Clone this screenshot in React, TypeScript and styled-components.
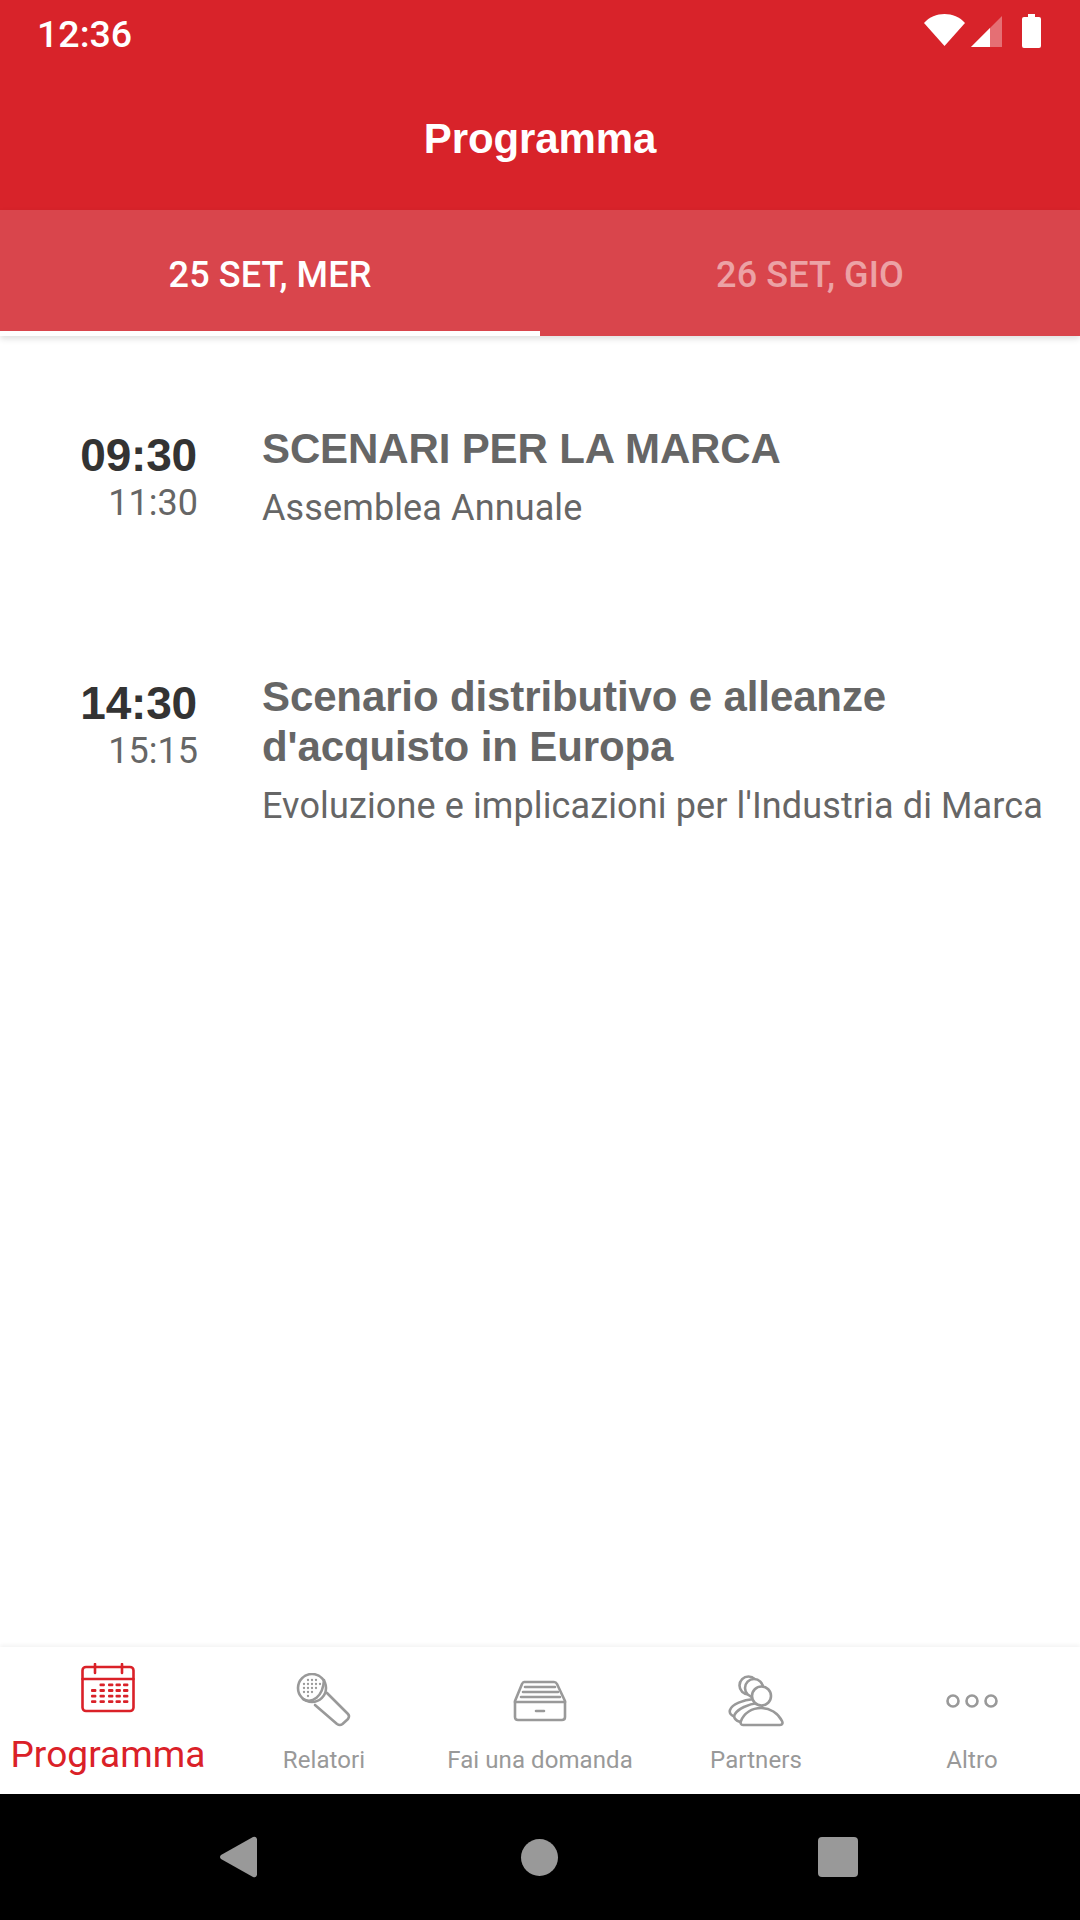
import React from "react";
import styled, { createGlobalStyle } from "styled-components";

const Global = createGlobalStyle`
  html, body { margin: 0; padding: 0; background: #fff; }
  #root { width: 1080px; height: 1920px; }
  * { box-sizing: border-box; }
`;

const Screen = styled.div`
  width: 1080px;
  height: 1920px;
  display: flex;
  flex-direction: column;
  overflow: hidden;
  background: #fff;
`;

const StatusBar = styled.div`
  height: 63px;
  background: #d8232a;
  display: flex;
  align-items: flex-start;
  justify-content: space-between;
  padding: 14px 38px 0 37px;
`;

const Clock = styled.span`
  font: 500 37.5px/40px Roboto, sans-serif;
  color: #fff;
`;

const StatusIcons = styled.svg`
  width: 118px;
  height: 36px;
  display: block;
`;

const Header = styled.header`
  height: 147px;
  background: #d8232a;
  display: flex;
  align-items: center;
  justify-content: center;
  padding-top: 4px;
`;

const HeaderTitle = styled.h1`
  margin: 0;
  font: 700 42px/48px "Liberation Sans", Arial, sans-serif;
  letter-spacing: -0.1px;
  color: #fff;
`;

const Tabs = styled.nav`
  height: 126px;
  background: #d9454c;
  display: flex;
  position: relative;
  z-index: 1;
  box-shadow: 0 3px 6px rgba(0, 0, 0, 0.12);
`;

const Tab = styled.div<{ $active?: boolean }>`
  flex: 1;
  display: flex;
  align-items: center;
  justify-content: center;
  padding-top: 3px;
  font: 500 36px/42px Roboto, sans-serif;
  letter-spacing: 0.1px;
  color: ${(p) => (p.$active ? "#fff" : "rgba(255,255,255,0.5)")};
  box-shadow: ${(p) => (p.$active ? "inset 0 -5px 0 #fff" : "none")};
`;

const Content = styled.main`
  flex: 1;
  padding-top: 88px;
`;

const Session = styled.article`
  display: flex;
  min-height: 248px;
`;

const Times = styled.div`
  width: 198px;
  flex: none;
  text-align: right;
  padding-top: 6px;
`;

const Start = styled.div`
  font: 700 46px/50px "Liberation Sans", Arial, sans-serif;
  letter-spacing: -0.2px;
  margin-right: 1px;
  color: #333;
`;

const End = styled.div`
  font: 400 36px/40px Roboto, sans-serif;
  margin-top: 3px;
  color: #666;
`;

const Body = styled.div`
  margin-left: 64px;
  flex: 1;
`;

const Title = styled.h2`
  margin: 0;
  font: 700 42px/50px "Liberation Sans", Arial, sans-serif;
  letter-spacing: -0.12px;
  color: #666;
`;

const Subtitle = styled.p`
  margin: 9px 0 0;
  font: 400 36px/50px Roboto, sans-serif;
  letter-spacing: 0.12px;
  color: #666;
  white-space: nowrap;
`;

const BottomNav = styled.nav`
  height: 147px;
  background: #fff;
  display: flex;
  position: relative;
  box-shadow: 0 -2px 4px rgba(0, 0, 0, 0.05);
`;

const NavItem = styled.div<{ $active?: boolean }>`
  width: 216px;
  display: flex;
  flex-direction: column;
  align-items: center;
  justify-content: flex-start;
  padding-top: ${(p) => (p.$active ? "16px" : "26px")};
  color: ${(p) => (p.$active ? "#da2128" : "#999")};
`;

const NavLabel = styled.span<{ $active?: boolean }>`
  font: 400 ${(p) => (p.$active ? "37px/44px" : "24px/30px")} Roboto, sans-serif;
  letter-spacing: 0.08px;
  margin-top: ${(p) => (p.$active ? "20px" : "16px")};
  white-space: nowrap;
`;

const NavIcon = styled.svg`
  display: block;
  fill: none;
  stroke: currentColor;
  stroke-width: 2.6;
  stroke-linecap: round;
  stroke-linejoin: round;
`;

const SystemBar = styled.div`
  height: 126px;
  background: #000;
  display: flex;
  align-items: center;
  padding-left: 220px;
`;

const BackKey = styled.svg`
  width: 37px;
  height: 42px;
  display: block;
`;

const HomeKey = styled.div`
  width: 37px;
  height: 37px;
  border-radius: 50%;
  background: #999;
  margin-left: 264px;
`;

const RecentKey = styled.div`
  width: 40px;
  height: 40px;
  border-radius: 4px;
  background: #999;
  margin-left: 260px;
`;

const IconSlot = styled.div<{ $h: number }>`
  height: ${(p) => p.$h}px;
  display: flex;
  align-items: center;
  justify-content: center;
`;

const calendarCols = [10, 18.5, 27, 34.5, 42];

const CalendarIcon = () => (
  <NavIcon width="54" height="50" viewBox="0 0 54 50">
    <rect x="1.5" y="4" width="51" height="44" rx="3.5" />
    <path d="M1.5 16H52.5M14 1V10M41 1V10" />
    <g stroke="none" fill="currentColor">
      {[0, 1, 2, 3].map((r) =>
        calendarCols.map((x, c) =>
          r === 0 && c === 0 ? null : <rect key={`${r}-${c}`} x={x} y={20.5 + r * 5.6} width="5.4" height="2.8" rx="1" />
        )
      )}
    </g>
  </NavIcon>
);

const micDots: [number, number][] = [
  [12, 7], [16, 7], [20, 7],
  [8, 11], [12, 11], [16, 11], [20, 11], [24, 11],
  [8, 15], [12, 15], [16, 15], [20, 15],
  [8, 19], [12, 19], [16, 19],
  [12, 23],
];

const MicIcon = () => (
  <NavIcon width="56" height="56" viewBox="0 0 56 56">
    <circle cx="16" cy="15" r="14" />
    <path d="M7 26C16 31 27 24 28 7" />
    <path d="M19 32L41 51Q44 53 46.5 51L52 46Q54 43 52 41L31 20" />
    <g stroke="none" fill="currentColor">
      {micDots.map(([x, y]) => (
        <circle key={`${x}-${y}`} cx={x} cy={y} r="1.15" />
      ))}
    </g>
  </NavIcon>
);

const DrawerIcon = () => (
  <NavIcon width="54" height="42" viewBox="0 0 54 42">
    <path d="M11 2H41Q43 2 44 4L52 21V37Q52 40 49 40H5Q2 40 2 37V21L9 4Q10 2 11 2Z" />
    <path d="M2 22H52" />
    <path d="M12 7H42M10 12H45M8 17H47M23 31H31" />
  </NavIcon>
);

const PartnersIcon = () => (
  <NavIcon width="56" height="52" viewBox="0 0 56 52">
    <g fill="#fff">
      <circle cx="20.5" cy="10.5" r="9" />
      <circle cx="26" cy="13" r="9" />
      <path d="M8 42C3 41 1 38 2 35C4 29 15 25 26 24C30 24 32 28 28 31C22 34 14 38 11 42Z" />
      <path d="M13 47C7 46 5 42 7 39C10 34 20 29 30 28C34 28 36 31 32 34C26 37 19 41 16 46Z" />
      <path d="M15 50H52C54.5 50 55 48 54 46C50 38 42 33 33 33C24 33 16 38 13 46C12 48 13 50 15 50Z" />
      <circle cx="33.5" cy="21" r="9.5" />
    </g>
  </NavIcon>
);

const MoreIcon = () => (
  <NavIcon width="54" height="18" viewBox="0 0 54 18">
    <circle cx="8" cy="9" r="5.5" />
    <circle cx="27" cy="9" r="5.5" />
    <circle cx="46" cy="9" r="5.5" />
  </NavIcon>
);

export default function App() {
  return (
    <Screen>
      <Global />
      <StatusBar>
        <Clock>12:36</Clock>
        <StatusIcons viewBox="0 0 118 36">
          <path d="M0 9C5 3 13 0 20.5 0C28 0 36 3 41 9L20.5 32Z" fill="#fff" />
          <path d="M47 33L78 2V33Z" fill="#fff" fillOpacity="0.35" />
          <path d="M47 33L66 14V33Z" fill="#fff" />
          <path d="M104 0H111V3H115Q117 3 117 5V32Q117 34 115 34H100Q98 34 98 32V5Q98 3 100 3H104Z" fill="#fff" />
        </StatusIcons>
      </StatusBar>
      <Header>
        <HeaderTitle>Programma</HeaderTitle>
      </Header>
      <Tabs>
        <Tab $active>25 SET, MER</Tab>
        <Tab>26 SET, GIO</Tab>
      </Tabs>
      <Content>
        <Session>
          <Times>
            <Start>09:30</Start>
            <End>11:30</End>
          </Times>
          <Body>
            <Title>SCENARI PER LA MARCA</Title>
            <Subtitle>Assemblea Annuale</Subtitle>
          </Body>
        </Session>
        <Session>
          <Times>
            <Start>14:30</Start>
            <End>15:15</End>
          </Times>
          <Body>
            <Title>
              Scenario distributivo e alleanze
              <br />
              d'acquisto in Europa
            </Title>
            <Subtitle>Evoluzione e implicazioni per l'Industria di Marca</Subtitle>
          </Body>
        </Session>
      </Content>
      <BottomNav>
        <NavItem $active>
          <IconSlot $h={50}>
            <CalendarIcon />
          </IconSlot>
          <NavLabel $active>Programma</NavLabel>
        </NavItem>
        <NavItem>
          <IconSlot $h={56}>
            <MicIcon />
          </IconSlot>
          <NavLabel>Relatori</NavLabel>
        </NavItem>
        <NavItem>
          <IconSlot $h={56}>
            <DrawerIcon />
          </IconSlot>
          <NavLabel>Fai una domanda</NavLabel>
        </NavItem>
        <NavItem>
          <IconSlot $h={56}>
            <PartnersIcon />
          </IconSlot>
          <NavLabel>Partners</NavLabel>
        </NavItem>
        <NavItem>
          <IconSlot $h={56}>
            <MoreIcon />
          </IconSlot>
          <NavLabel>Altro</NavLabel>
        </NavItem>
      </BottomNav>
      <SystemBar>
        <BackKey viewBox="0 0 37 42">
          <path d="M1 19L33 1Q36 0 37 3V39Q36 42 33 41L1 23Q-1 21 1 19Z" fill="#999" />
        </BackKey>
        <HomeKey />
        <RecentKey />
      </SystemBar>
    </Screen>
  );
}
